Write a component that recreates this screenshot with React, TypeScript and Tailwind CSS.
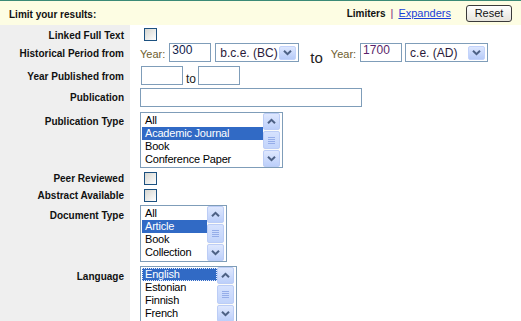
import React from "react";

function Check() {
  return (
    <div className="w-[13px] h-[13px] border border-[#1c5180] bg-linear-to-br from-[#d6d6d0] to-white" />
  );
}

function Chevron({ up }: { up?: boolean }) {
  return (
    <svg width="9" height="7" viewBox="0 0 9 7">
      <path
        d={up ? "M1 5.3 L4.5 1.8 L8 5.3" : "M1 1.7 L4.5 5.2 L8 1.7"}
        fill="none"
        stroke="#4d6185"
        strokeWidth="2"
      />
    </svg>
  );
}

function SBtn({ up }: { up?: boolean }) {
  return (
    <div className="h-[17px] w-[17px] rounded-[2px] border border-[#bccdf6] bg-linear-to-b from-[#dfe8fe] to-[#bccffa] flex items-center justify-center">
      <Chevron up={up} />
    </div>
  );
}

function ScrollBar() {
  return (
    <div className="w-[17px] mr-[2px] flex flex-col gap-[1px] bg-[#fbfbf8]">
      <SBtn up />
      <div className="flex-1 rounded-[2px] border border-[#bccdf6] bg-linear-to-b from-[#d6e2fe] to-[#c2d4fb] flex flex-col items-center justify-center gap-[1px]">
        <div className="w-[7px] h-[1px] bg-[#95ade9]" />
        <div className="w-[7px] h-[1px] bg-[#95ade9]" />
        <div className="w-[7px] h-[1px] bg-[#95ade9]" />
        <div className="w-[7px] h-[1px] bg-[#95ade9]" />
      </div>
      <SBtn />
    </div>
  );
}

function ListBox({
  className,
  items,
  selected,
  focus,
}: {
  className: string;
  items: string[];
  selected: number;
  focus?: boolean;
}) {
  return (
    <div className={"border border-[#7f9db9] bg-white flex " + className}>
      <div className="flex-1 pl-[1px] pt-[1px] overflow-hidden">
        {items.map((it, i) => (
          <div
            key={it}
            className={
              i === selected
                ? focus
                  ? "h-[13px] leading-[13px] pl-[3px] text-[11px] tracking-[-0.2px] whitespace-nowrap bg-[#316ac5] text-white outline-1 outline-dotted outline-[#e8eefc] -outline-offset-1"
                  : "h-[13px] leading-[13px] pl-[3px] text-[11px] tracking-[-0.2px] whitespace-nowrap bg-[#316ac5] text-white"
                : "h-[13px] leading-[13px] pl-[3px] text-[11px] tracking-[-0.2px] whitespace-nowrap text-black"
            }
          >
            {it}
          </div>
        ))}
      </div>
      <ScrollBar />
    </div>
  );
}

function Input({ className, value }: { className: string; value?: string }) {
  return (
    <div
      className={
        "h-[19px] border border-[#7f9db9] bg-white pl-[2px] text-[12px] leading-[13px] " +
        className
      }
    >
      {value}
    </div>
  );
}

function Select({ className, value }: { className: string; value: string }) {
  return (
    <div
      className={
        "h-[19px] border border-[#7f9db9] bg-white flex items-center pl-[4px] pr-[2px] text-[12px] " +
        className
      }
    >
      <span className="flex-1 leading-[14px] text-[#2a1a3a] whitespace-nowrap">{value}</span>
      <div className="w-[17px] h-[14px] rounded-[2px] border border-[#c3d3fb] bg-linear-to-b from-[#dde7fe] to-[#b7cbf8] flex items-center justify-center">
        <Chevron />
      </div>
    </div>
  );
}

function Row({
  h,
  pt,
  label,
  children,
}: {
  h: string;
  pt: string;
  label: string;
  children?: React.ReactNode;
}) {
  return (
    <div className={"flex shrink-0 " + h}>
      <div
        className={
          "w-[130px] shrink-0 bg-[#efefef] text-right pr-[6px] text-[10px] font-bold leading-[12px] text-[#111] whitespace-nowrap " +
          pt
        }
      >
        {label}
      </div>
      <div className="pl-[10px] flex-1">{children}</div>
    </div>
  );
}

export default function App() {
  return (
    <div className="w-[521px] h-[321px] overflow-hidden bg-white flex flex-col [font-family:'Liberation_Sans',Arial,sans-serif] text-black">
      <div className="h-[25px] shrink-0 border-t border-[#3b8a76] bg-[#fdfde3] flex items-start">
        <div className="pl-[9px] pt-[8px] text-[10px] font-bold leading-[12px] text-[#111]">
          Limit your results:
        </div>
        <div className="ml-auto flex items-start">
          <span className="mt-[7px] text-[10px] font-bold leading-[12px] text-[#111]">Limiters</span>
          <span className="mt-[6px] ml-[5px] text-[11px] leading-[13px] text-[#7a1f7a]">|</span>
          <span className="mt-[6px] ml-[5px] text-[11px] leading-[13px] text-[#1a3fd8] underline">
            Expanders
          </span>
          <div className="mt-[4px] ml-[15px] mr-[9px] w-[46px] h-[17px] rounded-[3px] border border-[#3a3a3a] bg-linear-to-b from-white to-[#e6e4dc] flex items-center justify-center text-[11px] leading-[13px] text-[#111]">
            Reset
          </div>
        </div>
      </div>

      <Row h="h-[18px]" pt="pt-[5px]" label="Linked Full Text">
        <div className="pt-[3px] pl-[4px]">
          <Check />
        </div>
      </Row>

      <Row h="h-[22px]" pt="pt-[5px]" label="Historical Period from">
        <div className="flex items-start">
          <span className="mt-[5px] text-[11px] leading-[13px] text-[#6e5e30]">Year:</span>
          <Input className="ml-[4px] w-[42px] text-[#10204a]" value="300" />
          <Select className="ml-[4px] w-[84px]" value="b.c.e. (BC)" />
          <span className="ml-[11px] mt-[6px] text-[15px] leading-[17px] text-[#222]">to</span>
          <span className="ml-[8px] mt-[5px] text-[11px] leading-[13px] text-[#6e5e30]">Year:</span>
          <Input className="ml-[4px] w-[42px] text-[#5a1f6a]" value="1700" />
          <Select className="ml-[3px] w-[83px]" value="c.e. (AD)" />
        </div>
      </Row>

      <Row h="h-[22px]" pt="pt-[6px]" label="Year Published from">
        <div className="flex items-start pt-[1px] pl-[1px]">
          <Input className="w-[42px]" />
          <span className="ml-[3px] mt-[6px] text-[12px] leading-[14px] text-[#222]">to</span>
          <Input className="ml-[2px] w-[42px]" />
        </div>
      </Row>

      <Row h="h-[22px]" pt="pt-[5px]" label="Publication">
        <div className="pt-[1px]">
          <Input className="w-[222px]" />
        </div>
      </Row>

      <Row h="h-[61px]" pt="pt-[7px]" label="Publication Type">
        <div className="pt-[3px]">
          <ListBox
            className="w-[143px] h-[56px]"
            items={["All", "Academic Journal", "Book", "Conference Paper"]}
            selected={1}
          />
        </div>
      </Row>

      <Row h="h-[17px]" pt="pt-[3px]" label="Peer Reviewed">
        <div className="pt-[2px] pl-[4px]">
          <Check />
        </div>
      </Row>

      <Row h="h-[16px]" pt="pt-[3px]" label="Abstract Available">
        <div className="pt-[2px] pl-[4px]">
          <Check />
        </div>
      </Row>

      <Row h="h-[61px]" pt="pt-[7px]" label="Document Type">
        <div className="pt-[2px]">
          <ListBox
            className="w-[87px] h-[57px]"
            items={["All", "Article", "Book", "Collection"]}
            selected={1}
          />
        </div>
      </Row>

      <Row h="flex-1" pt="pt-[7px]" label="Language">
        <div className="pt-[2px]">
          <ListBox
            className="w-[97px] h-[57px]"
            items={["English", "Estonian", "Finnish", "French"]}
            selected={0}
            focus
          />
        </div>
      </Row>
    </div>
  );
}
